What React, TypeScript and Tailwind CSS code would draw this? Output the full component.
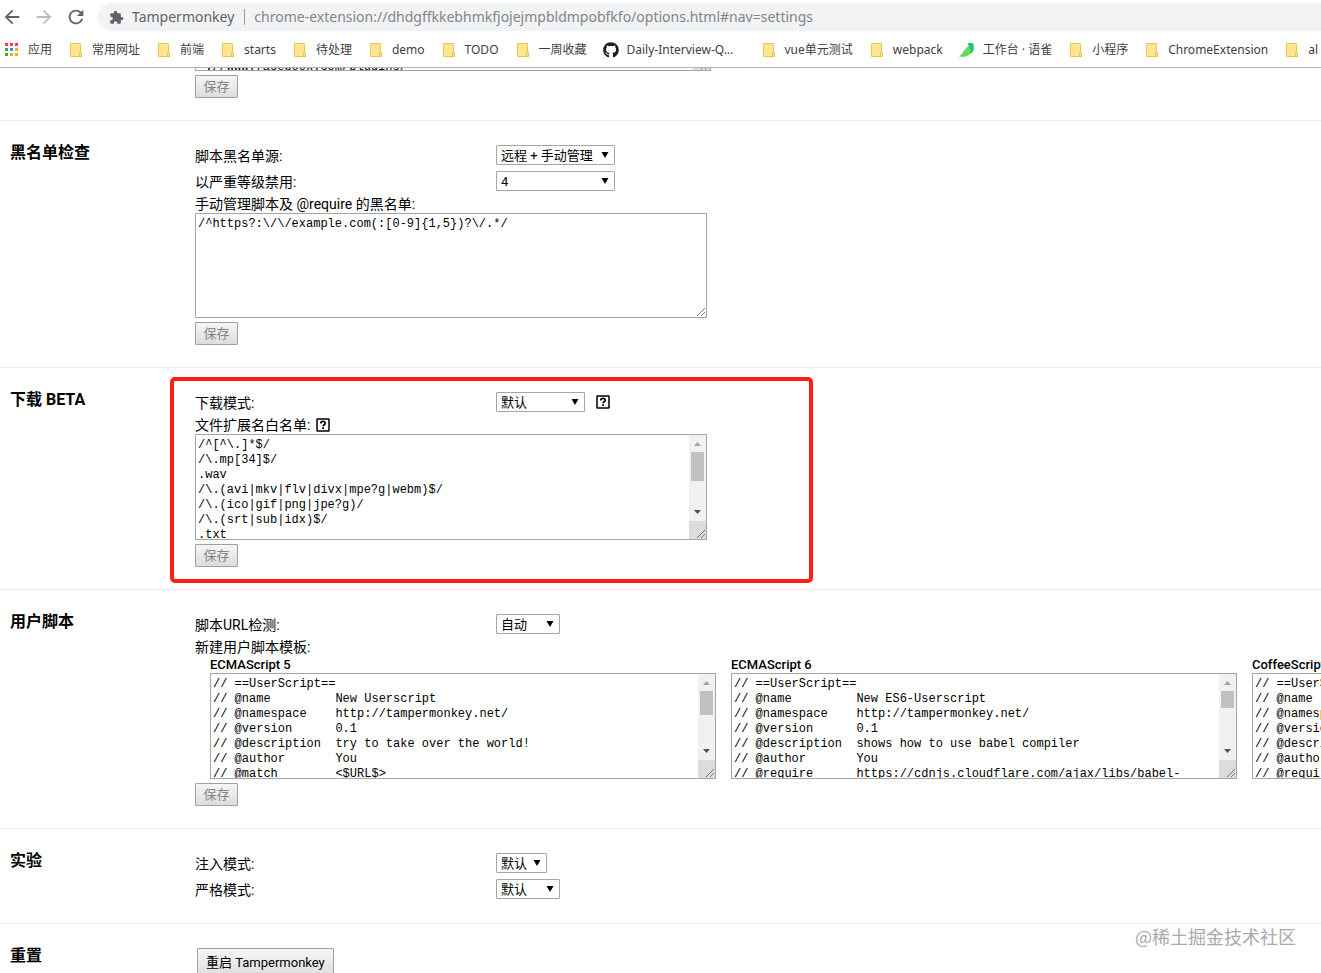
import { useState } from "react";
import type { ReactNode } from "react";
import clsx from "clsx";
import { FaGithub } from "react-icons/fa";
import { MdArrowBack, MdArrowForward, MdExtension, MdRefresh } from "react-icons/md";

type Bookmark = { label: string; icon?: "apps" | "github" | "yuque"; width?: string };

const bookmarks: Bookmark[] = [
  { label: "应用", icon: "apps" },
  { label: "常用网址" },
  { label: "前端" },
  { label: "starts" },
  { label: "待处理" },
  { label: "demo" },
  { label: "TODO" },
  { label: "一周收藏" },
  { label: "Daily-Interview-Q...", icon: "github", width: "w-[118px]" },
  { label: "vue单元测试" },
  { label: "webpack" },
  { label: "工作台 · 语雀", icon: "yuque" },
  { label: "小程序" },
  { label: "ChromeExtension" },
  { label: "al" },
];

const whitelist = [
  "/^[^\\.]*$/",
  "/\\.mp[34]$/",
  ".wav",
  "/\\.(avi|mkv|flv|divx|mpe?g|webm)$/",
  "/\\.(ico|gif|png|jpe?g)/",
  "/\\.(srt|sub|idx)$/",
  ".txt",
].join("\n");

const templates = [
  {
    name: "ECMAScript 5",
    thumb: "h-6",
    code: [
      "// ==UserScript==",
      "// @name         New Userscript",
      "// @namespace    http://tampermonkey.net/",
      "// @version      0.1",
      "// @description  try to take over the world!",
      "// @author       You",
      "// @match        <$URL$>",
    ].join("\n"),
  },
  {
    name: "ECMAScript 6",
    thumb: "h-[17px]",
    code: [
      "// ==UserScript==",
      "// @name         New ES6-Userscript",
      "// @namespace    http://tampermonkey.net/",
      "// @version      0.1",
      "// @description  shows how to use babel compiler",
      "// @author       You",
      "// @require      https://cdnjs.cloudflare.com/ajax/libs/babel-",
    ].join("\n"),
  },
  {
    name: "CoffeeScript",
    thumb: "h-[17px]",
    code: [
      "// ==UserScript==",
      "// @name",
      "// @namespace",
      "// @version",
      "// @description",
      "// @author",
      "// @require",
    ].join("\n"),
  },
];

function BookmarkIcon({ icon }: { icon?: Bookmark["icon"] }) {
  if (icon === "github") return <FaGithub className="h-4 w-4 shrink-0 text-[#1b1f23]" />;
  if (icon === "apps") {
    const colors = ["#f44336", "#f44336", "#f44336", "#34a853", "#2196f3", "#fbae05", "#34a853", "#fbae05", "#fbae05"];
    return (
      <svg viewBox="0 0 16 16" className="h-4 w-4 shrink-0" shapeRendering="crispEdges">
        {colors.map((c, i) => (
          <rect key={i} x={1 + (i % 3) * 5} y={1 + Math.floor(i / 3) * 5} width="3" height="3" fill={c} />
        ))}
      </svg>
    );
  }
  if (icon === "yuque") {
    return (
      <svg viewBox="0 0 16 16" className="h-4 w-4 shrink-0">
        <path d="M8.500 2C9.500 .8 11 .6 12.500 1c1 .3 1.600 1 2.800 1-.5.500-.8 1-.8 1.800C15.800 8 14 11.500 10 12L7 8 10 4z" fill="#25c47a" />
        <path d="M9.200 4C11.500 6.500 12.200 9.500 10.500 12 8.500 14.800 4 15.200 0 14.500 1.500 13.500 2.500 12 4 10z" fill="#5fdc5c" />
      </svg>
    );
  }
  return (
    <svg viewBox="0 0 16 16" className="h-4 w-4 shrink-0">
      <path d="M2.500 1.500h10v9.500h1v3.500h-11z" fill="#ffe693" stroke="#e8c64f" />
      <path d="M11.500 14.500v-4h2v4z" fill="#ffe693" stroke="#e8c64f" />
    </svg>
  );
}

function BrowserBar() {
  return (
    <header className="shrink-0 border-b border-[#b2b2b4] bg-white font-['Noto_Sans','Noto_Sans_CJK_SC',sans-serif]">
      <div className="flex h-[34px] items-center pl-px">
        <div className="flex gap-[10px] text-[#5f6368]">
          <button aria-label="后退">
            <MdArrowBack className="h-[22px] w-[22px]" />
          </button>
          <button aria-label="前进" className="text-[#babcbe]">
            <MdArrowForward className="h-[22px] w-[22px]" />
          </button>
          <button aria-label="刷新">
            <MdRefresh className="h-[22px] w-[22px]" />
          </button>
        </div>
        <div className="ml-[11px] flex h-7 min-w-0 flex-1 items-center rounded-l-full bg-[#f1f3f4] pl-[11px] text-sm">
          <button className="flex items-center gap-2 text-[#5f6368]">
            <MdExtension className="h-[15px] w-[15px]" />
            Tampermonkey
          </button>
          <span className="ml-[10px] h-4 w-px bg-[#9a9da1]" />
          <input
            aria-label="地址"
            defaultValue="chrome-extension://dhdgffkkebhmkfjojejmpbldmpobfkfo/options.html#nav=settings"
            className="ml-[9px] min-w-0 flex-1 bg-transparent text-[#80868b] outline-none"
          />
        </div>
      </div>
      <nav className="flex h-[33px] gap-4 overflow-hidden pb-[2px] pl-1 text-xs text-[#3c4043]">
        {bookmarks.map((b) => (
          <a key={b.label} href="#" className="flex shrink-0 items-center gap-2 whitespace-nowrap">
            <BookmarkIcon icon={b.icon} />
            <span className={b.width}>{b.label}</span>
          </a>
        ))}
      </nav>
    </header>
  );
}

function Section({ title, children }: { title?: string; children: ReactNode }) {
  return (
    <section className="relative flex border-b border-[#ebebeb] pb-[22px]">
      <h2 className="w-[195px] shrink-0 pt-[21px] pl-[10px] text-base leading-[22px] font-bold">{title}</h2>
      <div className="min-w-0 flex-1 pt-6">{children}</div>
    </section>
  );
}

function HelpIcon() {
  return (
    <svg viewBox="0 0 14 14" className="h-[14px] w-[14px] shrink-0" fill="none" stroke="#000">
      <rect x="1" y="1" width="12" height="12" rx="0.500" strokeWidth="1.500" />
      <path d="M4.800 5.400c0-2.700 4.500-2.600 4.500-.2 0 1.500-2.200 1.500-2.200 3" strokeWidth="1.700" />
      <path d="M7.100 9.300v1.700" strokeWidth="1.800" />
    </svg>
  );
}

function SelectRow({
  id,
  label,
  options,
  width,
  help,
}: {
  id: string;
  label: string;
  options: string[];
  width: string;
  help?: boolean;
}) {
  const [value, setValue] = useState(options[0]);
  return (
    <div className="flex h-5 items-center">
      <label htmlFor={id} className="w-[301px] shrink-0 pt-px">
        {label}
      </label>
      <div className={clsx("relative h-5", width)}>
        <select
          id={id}
          value={value}
          onChange={(e) => setValue(e.target.value)}
          className="h-5 w-full appearance-none rounded-[1px] border border-[#a6a6a6] bg-white pt-[2px] pl-1 text-[13px] leading-4 outline-none"
        >
          {options.map((o) => (
            <option key={o}>{o}</option>
          ))}
        </select>
        <svg viewBox="0 0 8 6" className="pointer-events-none absolute top-[7px] right-[6px] h-[6px] w-2">
          <path d="M.5 0h7L4 6z" />
        </svg>
      </div>
      {help && (
        <span className="ml-[11px]">
          <HelpIcon />
        </span>
      )}
    </div>
  );
}

function Grip() {
  return (
    <svg viewBox="0 0 10 10" className="h-[10px] w-[10px]" stroke="#6b6b6b" strokeWidth="0.900">
      <path d="M1 9L9 1M5 9l4-4" />
    </svg>
  );
}

function CodeArea({ id, value, size, thumb }: { id: string; value: string; size: string; thumb?: string }) {
  return (
    <div className={clsx("relative flex border border-[#a6a6a6] bg-white", size)}>
      <textarea
        id={id}
        defaultValue={value}
        spellCheck={false}
        className="block min-w-0 flex-1 resize-none overflow-hidden px-[2px] pt-[3px] font-['Liberation_Mono','Noto_Sans_CJK_SC',monospace] text-xs leading-[15px] whitespace-pre outline-none"
      />
      {thumb ? (
        <div className="flex w-[17px] shrink-0 flex-col bg-[#f1f1f1]">
          <svg viewBox="0 0 17 17" className="h-[17px] w-[17px]" fill="#a3a3a3">
            <path d="M5 11h7L8.500 7z" />
          </svg>
          <div className={clsx("mx-[2px] bg-[#c1c1c1]", thumb)} />
          <svg viewBox="0 0 17 17" className="mt-auto h-[17px] w-[17px]" fill="#505050">
            <path d="M5 6h7l-3.500 4z" />
          </svg>
          <div className="flex h-[18px] items-end justify-end bg-[#dcdcdc]">
            <Grip />
          </div>
        </div>
      ) : (
        <span className="absolute right-0 bottom-0">
          <Grip />
        </span>
      )}
    </div>
  );
}

function SaveButton() {
  return (
    <button
      disabled
      className="mt-1 block h-[23px] w-[43px] rounded-[1px] border border-[#a0a0a0] bg-linear-to-b from-[#f6f6f6] to-[#dddddd] text-[13px] leading-5 text-[#848484]"
    >
      保存
    </button>
  );
}

function AreaLabel({ htmlFor, children }: { htmlFor?: string; children: ReactNode }) {
  return (
    <label htmlFor={htmlFor} className="flex h-[22px] items-center gap-[6px] pt-1">
      {children}
    </label>
  );
}

export default function App() {
  return (
    <div className="relative flex h-screen flex-col overflow-hidden bg-white text-sm leading-[18px] text-black">
      <BrowserBar />

      <main className="min-h-0 flex-1 overflow-hidden font-['Roboto','Noto_Sans_CJK_SC',sans-serif]">
        {/* Tail of the section scrolled under the toolbar */}
        <section className="border-b border-[#ebebeb] pb-[22px] pl-[195px]">
          <div className="flex h-[3px] w-[516px] flex-col justify-end overflow-hidden border-x border-b border-[#a6a6a6]">
            <div className="flex h-[9px] shrink-0">
              <textarea
                aria-label="页面"
                defaultValue="*://www.facebook.com/plugins/*"
                spellCheck={false}
                className="h-[9px] min-w-0 flex-1 resize-none overflow-hidden px-[2px] font-['Liberation_Mono',monospace] text-xs leading-[13px] outline-none"
              />
              <div className="flex w-[17px] items-end justify-end bg-[#dcdcdc]">
                <Grip />
              </div>
            </div>
          </div>
          <SaveButton />
        </section>

        <Section title="黑名单检查">
          <div className="flex flex-col gap-[6px]">
            <SelectRow id="source" label="脚本黑名单源:" options={["远程 + 手动管理"]} width="w-[119px]" />
            <SelectRow id="severity" label="以严重等级禁用:" options={["4"]} width="w-[119px]" />
          </div>
          <AreaLabel htmlFor="blacklist">手动管理脚本及 @require 的黑名单:</AreaLabel>
          <CodeArea id="blacklist" value={"/^https?:\\/\\/example.com(:[0-9]{1,5})?\\/.*/"} size="h-[105px] w-[512px]" />
          <SaveButton />
        </Section>

        <div className="relative">
          <Section title="下载 BETA">
            <SelectRow id="download" label="下载模式:" options={["默认"]} width="w-[89px]" help />
            <AreaLabel htmlFor="whitelist">
              文件扩展名白名单: <HelpIcon />
            </AreaLabel>
            <CodeArea id="whitelist" value={whitelist} size="h-[106px] w-[512px]" thumb="h-[29px]" />
            <SaveButton />
          </Section>
          <div className="pointer-events-none absolute top-[9px] left-[170px] h-[206px] w-[643px] rounded-[5px] border-4 border-[#ff2012]" />
        </div>

        <Section title="用户脚本">
          <SelectRow id="detect" label="脚本URL检测:" options={["自动"]} width="w-16" />
          <AreaLabel>新建用户脚本模板:</AreaLabel>
          <div className="flex gap-[15px] overflow-hidden pl-[15px]">
            {templates.map((t) => (
              <div key={t.name} className="shrink-0">
                <label htmlFor={t.name} className="block h-[17px] text-[13px] leading-[18px] font-medium">
                  {t.name}
                </label>
                <CodeArea id={t.name} value={t.code} size="h-[106px] w-[506px]" thumb={t.thumb} />
              </div>
            ))}
          </div>
          <SaveButton />
        </Section>

        <Section title="实验">
          <div className="flex flex-col gap-[6px] pb-[2px]">
            <SelectRow id="inject" label="注入模式:" options={["默认"]} width="w-[51px]" />
            <SelectRow id="strict" label="严格模式:" options={["默认"]} width="w-16" />
          </div>
        </Section>

        <Section title="重置">
          <button className="ml-[2px] block h-[30px] rounded-[1px] border border-[#a0a0a0] bg-linear-to-b from-[#f6f6f6] to-[#dddddd] px-2 text-[13px]">
            重启 Tampermonkey
          </button>
        </Section>
      </main>

      <span className="pointer-events-none absolute right-[25px] bottom-[25px] font-['Noto_Sans_CJK_SC',sans-serif] text-lg leading-6 text-[#a9a9a9]">
        @稀土掘金技术社区
      </span>
    </div>
  );
}
